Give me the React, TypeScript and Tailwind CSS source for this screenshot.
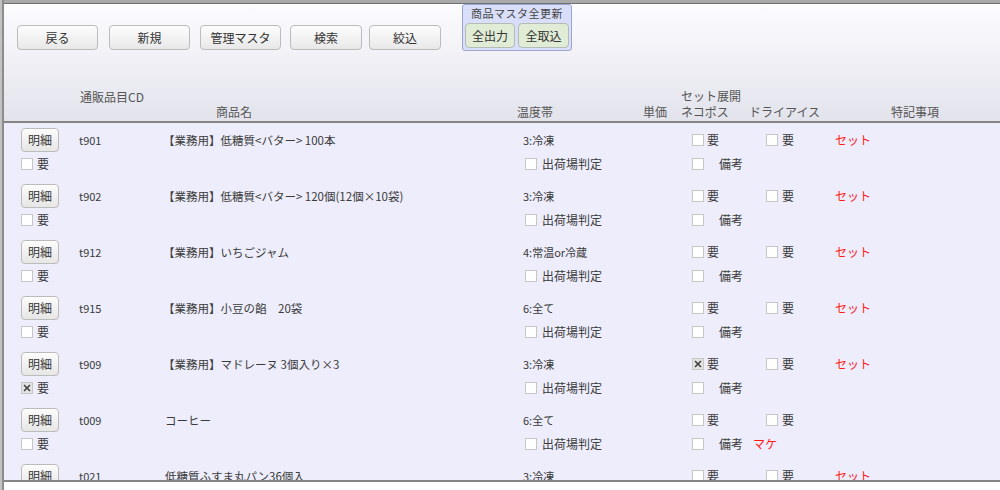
import React from "react";

interface Item {
    code: string;
    name: string;
    temp: string;
    req: boolean;
    neko: boolean;
    note?: string;
    set: boolean;
}

const items: Item[] = [
    { code: "t901", name: "【業務用】低糖質<バター> 100本", temp: "3:冷凍", req: false, neko: false, set: true },
    { code: "t902", name: "【業務用】低糖質<バター> 120個(12個×10袋)", temp: "3:冷凍", req: false, neko: false, set: true },
    { code: "t912", name: "【業務用】いちごジャム", temp: "4:常温or冷蔵", req: false, neko: false, set: true },
    { code: "t915", name: "【業務用】小豆の餡　20袋", temp: "6:全て", req: false, neko: false, set: true },
    { code: "t909", name: "【業務用】マドレーヌ 3個入り×3", temp: "3:冷凍", req: true, neko: true, set: true },
    { code: "t009", name: "コーヒー", temp: "6:全て", req: false, neko: false, note: "マケ", set: false },
    { code: "t021", name: "低糖質ふすま丸パン36個入", temp: "3:冷凍", req: false, neko: false, set: true },
];

const Check: React.FC<{ checked?: boolean }> = ({ checked }) => (
    <span
        className={`w-[12px] h-[12px] shrink-0 border border-[#c6c6c6] flex items-center justify-center ${
            checked ? "bg-[#e4e4e4]" : "bg-white"
        }`}
    >
        {checked && (
            <svg width="8" height="8" viewBox="0 0 8 8">
                <path d="M1 1L7 7M7 1L1 7" stroke="#404040" strokeWidth="1.6" />
            </svg>
        )}
    </span>
);

const ToolButton: React.FC<{ label: string; className?: string }> = ({ label, className }) => (
    <button
        className={`h-[25px] rounded-[4px] border border-[#bcbcbc] bg-gradient-to-b from-[#fdfdfd] to-[#e8e8e8] text-[12px] text-[#333] leading-none ${className}`}
    >
        {label}
    </button>
);

const Row: React.FC<{ item: Item }> = ({ item }) => (
    <div className="h-[56px] shrink-0 pt-[5px] flex text-[12px] leading-[16px] text-[#3a3a3a] whitespace-nowrap">
        <div className="w-[75px] shrink-0 pl-[17px] flex flex-col">
            <button className="w-[38px] h-[24px] rounded-[4px] border border-[#bcbcbc] bg-gradient-to-b from-[#fdfdfd] to-[#e6e6e6] text-[12px] text-[#333]">
                明細
            </button>
            <div className="h-[24px] flex items-center gap-[4px]">
                <Check checked={item.req} />
                <span>要</span>
            </div>
        </div>
        <div className="w-[84px] shrink-0 h-[24px] flex items-center text-[11px]">{item.code}</div>
        <div
            className={`w-[360px] shrink-0 h-[24px] flex items-center text-[11.5px] ${
                item.name.startsWith("【") ? "" : "pl-[2px]"
            }`}
        >
            {item.name}
        </div>
        <div className="w-[169px] shrink-0 flex flex-col">
            <div className="h-[24px] flex items-center text-[11px]">{item.temp}</div>
            <div className="h-[24px] flex items-center pl-[2px] gap-[5px]">
                <Check />
                <span>出荷場判定</span>
            </div>
        </div>
        <div className="w-[74px] shrink-0 flex flex-col">
            <div className="h-[24px] flex items-center gap-[3px]">
                <Check checked={item.neko} />
                <span>要</span>
            </div>
            <div className="h-[24px] flex items-center">
                <Check />
                <span className="ml-[15px] shrink-0">備考</span>
                {item.note && <span className="ml-[10px] shrink-0 text-[#ff1a1a]">{item.note}</span>}
            </div>
        </div>
        <div className="w-[69px] shrink-0 h-[24px] flex items-center gap-[4px]">
            <Check />
            <span>要</span>
        </div>
        <div className="h-[24px] flex items-center text-[#ff1a1a]">{item.set ? "セット" : ""}</div>
    </div>
);

export default function App() {
    return (
        <div className="w-[1000px] h-[490px] flex overflow-hidden bg-white font-['Noto_Sans_CJK_JP',sans-serif]">
            <div className="w-[2px] bg-[#c2c2c2] border-r-2 border-[#8c8c8c] box-content" />
            <div className="flex-1 flex flex-col">
                <div className="h-[3px] bg-[#a9a9a9] border-b border-[#707070] box-content" />
                {/* header */}
                <div className="h-[117px] flex flex-col justify-between bg-gradient-to-b from-[#fcfcff] to-[#e3e3ec] border-b-2 border-[#858585] box-content">
                    <div className="flex items-start">
                        <ToolButton label="戻る" className="w-[81px] ml-[13px] mt-[21px]" />
                        <ToolButton label="新規" className="w-[81px] ml-[11px] mt-[21px]" />
                        <ToolButton label="管理マスタ" className="w-[81px] ml-[10px] mt-[21px]" />
                        <ToolButton label="検索" className="w-[72px] ml-[9px] mt-[21px]" />
                        <ToolButton label="絞込" className="w-[72px] ml-[7px] mt-[21px]" />
                        <div className="ml-[21px] w-[110px] h-[47px] rounded-[3px] border border-[#9ca4d0] bg-[#d9defa] flex flex-col items-center">
                            <div className="h-[17px] text-[11px] leading-[17px] text-[#444] tracking-[0.5px]">
                                商品マスタ全更新
                            </div>
                            <div className="flex gap-[3px] mt-[1px]">
                                <button className="w-[50px] h-[25px] rounded-[4px] border border-[#b4bcb4] bg-[#e1ecd6] text-[12px] text-[#333]">
                                    全出力
                                </button>
                                <button className="w-[51px] h-[25px] rounded-[4px] border border-[#b4bcb4] bg-[#e1ecd6] text-[12px] text-[#333]">
                                    全取込
                                </button>
                            </div>
                        </div>
                    </div>
                    <div className="flex items-end text-[12px] leading-[16px] text-[#555] pb-[1px]">
                        <div className="w-[76px]" />
                        <div className="w-[136px] self-start mt-[1px]">通販品目CD</div>
                        <div className="w-[301px]">商品名</div>
                        <div className="w-[126px]">温度帯</div>
                        <div className="w-[38px]">単価</div>
                        <div className="w-[68px] flex flex-col">
                            <span>セット展開</span>
                            <span>ネコポス</span>
                        </div>
                        <div className="w-[142px]">ドライアイス</div>
                        <div>特記事項</div>
                    </div>
                </div>
                {/* rows */}
                <div className="h-[357px] flex flex-col overflow-hidden bg-[#ededfb] border-b-2 border-[#858585] box-content">
                    {items.map((item) => (
                        <Row key={item.code} item={item} />
                    ))}
                </div>
                <div className="flex-1 bg-white" />
            </div>
        </div>
    );
}
